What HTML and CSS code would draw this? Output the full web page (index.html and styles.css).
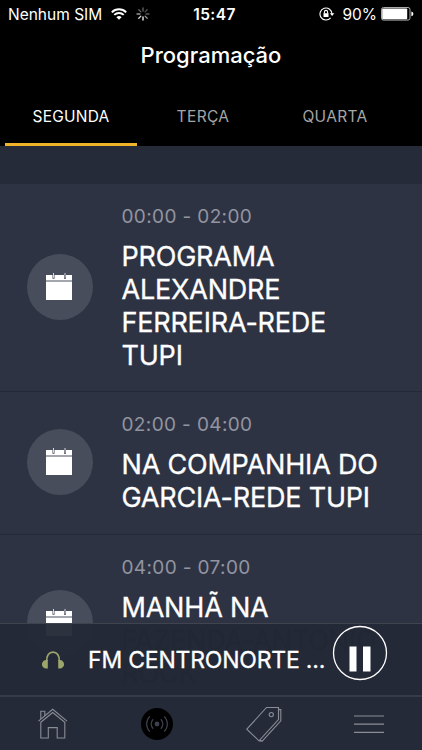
FILE: index.html
```html
<!DOCTYPE html>
<html lang="pt-BR">
<head>
<meta charset="utf-8">
<title>Programação</title>
<link rel="stylesheet" href="styles.css">
</head>
<body>
<svg width="0" height="0" class="defs">
  <symbol id="calendar" viewBox="0 0 26 27">
    <path d="M0 2h26v5.600H0zM0 8.600h26V27H0z" fill="#fff"/>
    <path d="M7.500 2v3.800M19 2v3.800" stroke="#484d5b" stroke-width="2"/>
    <path d="M7.500 0v4.800M19 0v4.800" stroke="#d8d9dd" stroke-width="1"/>
  </symbol>
</svg>
<div class="screen">
  <header>
    <div class="status">
      <div class="left">
        <span class="carrier">Nenhum SIM</span>
        <svg class="wifi" width="16" height="12" viewBox="0 0 16 12" fill="none" stroke="#fff" stroke-width="1.9"><path d="M.8 4.3a10.2 10.2 0 0 1 14.4 0M3.3 6.9a6.6 6.6 0 0 1 9.4 0"/><path d="M8 11.8L5.4 9.2a3.7 3.7 0 0 1 5.2 0z" fill="#fff" stroke="none"/></svg>
        <svg class="spinner" width="14" height="14" viewBox="-7 -7 14 14" stroke="#fff" stroke-width="1.3" stroke-linecap="round">
          <path d="M0-3V-6" opacity=".4"/><path d="M2.1-2.1L4.2-4.2" opacity=".3"/><path d="M3 0H6" opacity=".35"/><path d="M2.1 2.1L4.2 4.2" opacity=".6"/><path d="M0 3V6"/><path d="M-2.1 2.1L-4.2 4.2" opacity=".85"/><path d="M-3 0H-6" opacity=".6"/><path d="M-2.1-2.1L-4.2-4.2" opacity=".4"/>
        </svg>
      </div>
      <span class="clock">15:47</span>
      <div class="right">
        <svg class="lock" width="16" height="14" viewBox="0 0 16 14" fill="none" stroke="#fff" stroke-width="1.1"><path d="M11.6 10.9A6 6 0 1 1 13 7"/><path d="M10.8 6.2h4.6L13.1 9z" fill="#fff" stroke="none"/><path d="M4.5 6.2h5V10h-5z" fill="#fff" stroke="none"/><path d="M5.4 6.5V5a1.6 1.6 0 0 1 3.2 0v1.5"/></svg>
        <span class="percent">90%</span>
        <svg width="33" height="14" viewBox="0 0 33 14"><rect x=".5" y=".5" width="28.5" height="12.6" rx="2" fill="none" stroke="#aaa"/><rect x="1.2" y="1.4" width="25" height="10.800" rx=".8" fill="#fff"/><path d="M30.4 4.6q2 .5 2 2.3t-2 2.3z" fill="#fff"/></svg>
      </div>
    </div>
    <h1><span>Programação</span></h1>
    <nav class="tabs">
      <div class="tab active"><span>SEGUNDA</span></div>
      <div class="tab"><span>TERÇA</span></div>
      <div class="tab"><span>QUARTA</span></div>
    </nav>
  </header>
  <main>
    <section class="row tall">
      <div class="badge"><svg width="26" height="27"><use href="#calendar"/></svg></div>
      <div class="info"><div class="time">00:00 - 02:00</div><h2>PROGRAMA<br>ALEXANDRE<br>FERREIRA-REDE<br>TUPI</h2></div>
    </section>
    <section class="row short">
      <div class="badge"><svg width="26" height="27"><use href="#calendar"/></svg></div>
      <div class="info"><div class="time">02:00 - 04:00</div><h2>NA COMPANHIA DO<br>GARCIA-REDE TUPI</h2></div>
    </section>
    <section class="row">
      <div class="badge"><svg width="26" height="27"><use href="#calendar"/></svg></div>
      <div class="info"><div class="time">04:00 - 07:00</div><h2>MANHÃ NA<br><span class="under">FAZENDA-ANTONIO<br>ROCK</span></h2></div>
    </section>
  </main>
  <footer>
    <div class="player">
      <svg class="phones" width="24" height="18" viewBox="0 0 24 18"><path d="M5.800 10C5.400 4.500 8 1.200 12 1.200s6.600 3.300 6.200 8.800" fill="none" stroke="#9ca66b" stroke-width="1.700"/><path d="M6.800 9v8.500H5.200A4.250 4.250 0 0 1 5.200 9zM17.200 9v8.500h1.600A4.250 4.250 0 0 0 18.800 9z" fill="#9ca66b"/></svg>
      <span class="station">FM CENTRONORTE ...</span>
      <svg class="pause" width="56" height="56" viewBox="0 0 56 56"><circle cx="28" cy="28" r="26.500" fill="none" stroke="#fff" stroke-width="1.300"/><path d="M17.500 21.500h7v25h-7zM31 21.500h7.500v25H31z" fill="#fff"/></svg>
    </div>
    <nav class="bottom">
      <svg width="32" height="32" viewBox="0 0 32 32" fill="none" stroke="#8a8d96" stroke-width="1.100"><path d="M1.500 13.200L15.700 1.300 30 13.200M3.800 14.200L15.700 4.500 27.800 14.200V30H20.200V19.600H11.300V30H3.800zM3.800 11V3.200H7.800V7.600"/></svg>
      <svg width="32" height="32" viewBox="0 0 32 32"><circle cx="16" cy="16" r="16"/><circle cx="16" cy="16" r="2.400" fill="#3c414d"/><path d="M12.200 11.300a6.500 6.500 0 0 0 0 9.400M19.800 11.300a6.500 6.500 0 0 1 0 9.400M8.800 8.300a11 11 0 0 0 0 15.400M23.200 8.300a11 11 0 0 1 0 15.400" fill="none" stroke="#3c414d" stroke-width="1.200"/></svg>
      <svg width="36" height="36" viewBox="0 0 36 36" fill="none" stroke="#8a8d96" stroke-width="1.100"><path d="M.8 23.200L20.500 1.500H32.500V13.500L13 34.800z"/><path d="M32.500 3.600H34.800V14.800L16 35.400 14.300 33.800M13 34.800l1.700.5"/><circle cx="25.300" cy="8.600" r="2.100"/></svg>
      <svg width="30" height="20" viewBox="0 0 30 20" stroke="#8a8d96" stroke-width="1.200"><path d="M0 2h30M0 10.200h30M0 18.300h30"/></svg>
    </nav>
  </footer>
</div>
</body>
</html>
```
FILE: styles.css
```css
* { box-sizing: border-box; }
body { margin: 0; background: #252a38; font-family: Inter, "Liberation Sans", sans-serif; color: #fff; }
h1, h2 { margin: 0; font-weight: 500; }
.defs { position: absolute; }
.screen { position: relative; width: 422px; height: 750px; overflow: hidden; background: #252b38; }
span { white-space: nowrap; }
header { height: 146px; background: #000; }
.status { height: 28px; display: grid; grid-template-columns: 1fr auto 1fr; align-items: center; padding: 0 8px 0 8px; }
.left, .right { display: flex; align-items: center; }
.right { justify-content: flex-end; }
.carrier { font-size: 15.500px; }
.wifi { margin-left: 9px; }
.spinner { margin-left: 9px; }
.clock { font-size: 15.500px; font-weight: 600; letter-spacing: .4px; padding-left: 7px; }
.lock { margin-right: 7px; margin-left: 2px; }
.percent { font-size: 15.500px; margin-right: 4px; }
h1 { height: 56px; font-size: 22px; line-height: 55px; text-align: center; }
.tabs { height: 62px; padding-left: 5px; display: flex; }
.tab { flex: 0 0 132px; height: 62px; line-height: 66px; text-align: center; color: #a5a5a5; font-size: 15.500px; letter-spacing: .35px; }
.active { color: #fff; letter-spacing: .2px; border-bottom: 3px solid #f0b42b; }
main { padding-top: 38px; }
.row { display: flex; align-items: center; padding: 22px 0 19.400px 26.500px; background: #2e3344; border-bottom: 1px solid #242937; }
.badge { flex: none; width: 66px; height: 66px; border-radius: 50%; background: #484d5b; display: flex; align-items: center; justify-content: center; }
.badge svg { margin-right: 1px; margin-bottom: 2px; }
.tall .badge { margin-bottom: 4px; }
.short .badge { margin-bottom: 4px; }
.info { margin-left: 29px; }
.time { height: 34px; line-height: 22px; font-size: 19px; letter-spacing: .37px; color: #9295a0; white-space: nowrap; }
h2 { font-size: 27px; line-height: 33px; font-weight: 400; letter-spacing: -.2px; -webkit-text-stroke: .3px currentColor; white-space: nowrap; }
.under { color: #000; }
footer { position: absolute; left: 0; right: 0; bottom: 0; height: 127px; }
.player { height: 72px; display: flex; align-items: center; padding: 0 34px 0 41px; background: rgba(36, 41, 54, .955); border-top: 1px solid #40444f; }
.station { margin-left: 23px; font-size: 23px; letter-spacing: -.2px; -webkit-text-stroke: .3px currentColor; flex: 1; }
.pause { margin-top: -13px; flex: none; }
.bottom { height: 55px; padding: 0 38px 0 37px; display: flex; align-items: center; justify-content: space-between; background: #252a38; border-top: 2px solid #363b48; }
```
